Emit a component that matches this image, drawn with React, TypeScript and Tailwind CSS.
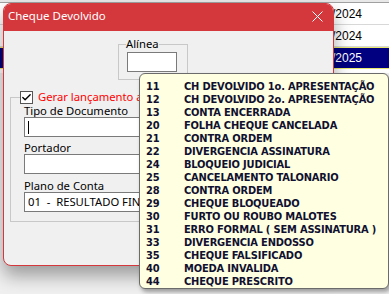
import { Check } from "lucide-react";

const alineas = [
  ["11", "CH DEVOLVIDO 1o. APRESENTAÇÃO"],
  ["12", "CH DEVOLVIDO 2o. APRESENTAÇÃO"],
  ["13", "CONTA ENCERRADA"],
  ["20", "FOLHA CHEQUE CANCELADA"],
  ["21", "CONTRA ORDEM"],
  ["22", "DIVERGENCIA ASSINATURA"],
  ["24", "BLOQUEIO JUDICIAL"],
  ["25", "CANCELAMENTO TALONARIO"],
  ["28", "CONTRA ORDEM"],
  ["29", "CHEQUE BLOQUEADO"],
  ["30", "FURTO OU ROUBO MALOTES"],
  ["31", "ERRO FORMAL ( SEM ASSINATURA )"],
  ["33", "DIVERGENCIA ENDOSSO"],
  ["35", "CHEQUE FALSIFICADO"],
  ["40", "MOEDA INVALIDA"],
  ["44", "CHEQUE PRESCRITO"],
];

const gridRows = [
  { date: "15/01/2024", selected: false },
  { date: "22/03/2024", selected: false },
  { date: "10/01/2025", selected: true },
];

function Field({ label, children }: { label: string; children?: React.ReactNode }) {
  return (
    <div className="flex flex-col">
      <span className="h-[13px] leading-[13px] text-[11.25px] text-black">{label}</span>
      <div className="w-[288px] h-[20px] bg-white border border-[#7a7a7a] flex items-center pl-[3px] text-[11.25px]">
        {children}
      </div>
    </div>
  );
}

export default function App() {
  return (
    <div className="relative w-[389px] h-[294px] overflow-hidden bg-[#f0f0f0] font-['Noto_Sans',sans-serif]">
      {/* grid behind the dialog */}
      <div className="flex flex-col">
        <div className="h-[3px] bg-[#e8e8e8] border-b border-[#a0a0a0]" />
        {gridRows.map((r) => (
          <div
            key={r.date}
            className={`h-[22px] flex items-center justify-end pr-[27px] text-[12px] font-['Liberation_Sans',sans-serif] ${
              r.selected
                ? "bg-[#000080] text-white border-y border-[#e8e870]"
                : "bg-white text-black border-b border-[#d8d8d8]"
            }`}
          >
            {r.date}
          </div>
        ))}
        <div className="h-[4px] bg-white" />
      </div>

      {/* dialog window */}
      <div className="absolute left-[3px] top-[3px] w-[331px] h-[263px] rounded-[8px] border border-[#d4373c] bg-[#f0f0f0] overflow-hidden shadow-[0_10px_18px_rgba(0,0,0,0.35)]">
        <div className="h-[27px] bg-[#d4373c] flex items-center justify-between pl-[4px] pr-[10px]">
          <span className="text-white text-[11.5px] -mt-[3px]">Cheque Devolvido</span>
          <svg width="11" height="11" viewBox="0 0 11 11" className="-mt-[3px]">
            <path d="M0.5 0.5 L10.5 10.5 M10.5 0.5 L0.5 10.5" stroke="white" strokeWidth="1" />
          </svg>
        </div>

        <div className="flex flex-col pt-[6px]">
          <fieldset className="ml-[114px] w-[70px] border border-[#c8c8c8] pl-[8px] pb-[7px]">
            <legend className="-ml-px h-[14px] leading-[14px] text-[11.25px] text-black">Alínea</legend>
            <div className="mt-px w-[50px] h-[20px] bg-white border border-[#7a7a7a]" />
          </fieldset>

          <fieldset className="mt-[10px] ml-[6px] w-[316px] border border-[#c8c8c8] pl-[9px] pb-[9px]">
            <legend className="h-[14px] flex items-center gap-[5px] text-[11.25px] leading-[14px]">
              <span className="w-[13px] h-[13px] bg-white border border-[#555555] flex items-center justify-center">
                <Check className="w-[11px] h-[11px]" strokeWidth={3} color="#000" />
              </span>
              <span className="text-[#ff0000] whitespace-nowrap">Gerar lançamento a receber</span>
            </legend>
            <div className="flex flex-col gap-[4px] pl-[4px]">
              <Field label="Tipo de Documento">
                <span className="w-px h-[13px] bg-black" />
              </Field>
              <Field label="Portador" />
              <div className="mt-px">
                <Field label="Plano de Conta">
                  <span className="whitespace-pre">01  -  RESULTADO FINANCEIRO</span>
                </Field>
              </div>
            </div>
          </fieldset>
        </div>
      </div>

      {/* hint popup */}
      <div className="absolute left-[139px] top-[73px] w-[250px] h-[216px] rounded-[6px] border border-[#6b6b6b] bg-[#ffffe1] pt-[6px] shadow-[2px_3px_4px_rgba(0,0,0,0.35)] font-['DejaVu_Sans_Condensed','DejaVu_Sans',sans-serif] font-bold text-[11px] leading-[13px] tracking-[-0.17px] text-[#101030]">
        {alineas.map(([code, text]) => (
          <div key={code + text} className="flex whitespace-nowrap">
            <span className="w-[44px] pl-[6px]">{code}</span>
            <span>{text}</span>
          </div>
        ))}
      </div>
    </div>
  );
}
